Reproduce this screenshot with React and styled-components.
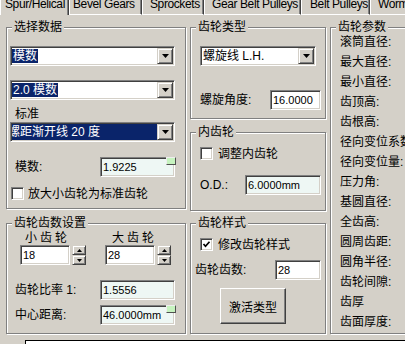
import React from 'react';
import styled, { createGlobalStyle } from 'styled-components';

const GlobalStyle = createGlobalStyle`
  * { box-sizing: border-box; }
  html, body { margin: 0; padding: 0; }
  body {
    width: 405px;
    height: 344px;
    overflow: hidden;
    background: #d4d0c8;
    color: #000;
    font-family: "Liberation Sans", "Noto Sans CJK SC", sans-serif;
    font-size: 12px;
  }
`;

const Window = styled.div`
  width: 405px;
  height: 344px;
  overflow: hidden;
  background: #d4d0c8;
`;

const TabBar = styled.div`
  display: flex;
  height: 15px;
`;

const Tab = styled.div`
  flex: 0 0 ${(p) => p.$w}px;
  height: 15px;
  padding-left: ${(p) => p.$pl}px;
  border-left: 1px solid #fff;
  border-right: 1px solid #404040;
  border-bottom: ${(p) => (p.$active ? '0' : '1px solid #fff')};
  box-shadow: inset -1px 0 0 #808080;
  font-size: 12px;
  letter-spacing: -0.4px;
  line-height: 8px;
  white-space: nowrap;
  overflow: hidden;
`;

const Panel = styled.div`
  display: flex;
  align-items: flex-start;
  gap: 4px;
  padding: 12px 0 0 6px;
`;

const Column = styled.div`
  flex: 0 0 ${(p) => p.$w}px;
  display: flex;
  flex-direction: column;
`;

const Group = styled.div`
  position: relative;
  height: ${(p) => p.$h}px;
  margin-top: ${(p) => p.$mt || 0}px;
  border: 1px solid #808080;
  box-shadow: inset 1px 1px 0 #fff, 1px 1px 0 #fff;
  display: flex;
  flex-direction: column;
  align-items: flex-start;
`;

const Legend = styled.span`
  position: absolute;
  top: -8px;
  left: 5px;
  padding: 0 2px;
  background: #d4d0c8;
  line-height: 14px;
  white-space: nowrap;
`;

const Combo = styled.div`
  display: flex;
  width: ${(p) => p.$w}px;
  height: 20px;
  margin: ${(p) => p.$mt}px 0 0 ${(p) => p.$ml}px;
  border: 1px solid;
  border-color: #808080 #fff #fff #808080;
  box-shadow: inset 1px 1px 0 #404040, inset -1px -1px 0 #d4d0c8;
  padding: 1px;
  background: #fff;
`;

const ComboValue = styled.div`
  flex: 1;
  min-width: 0;
  height: 16px;
  overflow: hidden;
  white-space: nowrap;
  line-height: 16px;
  padding-left: ${(p) => (p.$plain ? 1 : 0)}px;
  text-indent: ${(p) => p.$indent || 0}px;
  background: ${(p) => (p.$full ? '#0a246a' : 'transparent')};
  color: ${(p) => (p.$full ? '#fff' : '#000')};
`;

const Selected = styled.span`
  display: inline-block;
  vertical-align: top;
  margin-top: 1px;
  padding: 0 1px;
  line-height: 14px;
  background: #0a246a;
  color: #fff;
`;

const DropButton = styled.div`
  flex: 0 0 16px;
  height: 16px;
  display: flex;
  align-items: center;
  justify-content: center;
  background: #d4d0c8;
  border: 1px solid;
  border-color: #d4d0c8 #404040 #404040 #d4d0c8;
  box-shadow: inset 1px 1px 0 #fff, inset -1px -1px 0 #808080;
`;

const Caption = styled.div`
  margin: ${(p) => p.$mt}px 0 0 ${(p) => p.$ml}px;
  line-height: 16px;
  white-space: nowrap;
`;

const Row = styled.div`
  align-self: stretch;
  display: flex;
  align-items: center;
  height: 20px;
  margin-top: ${(p) => p.$mt}px;
  padding: 0 ${(p) => p.$pr}px 0 ${(p) => p.$pl}px;
`;

const Label = styled.span`
  flex: 1;
  white-space: nowrap;
  line-height: 14px;
`;

const Field = styled.div`
  position: relative;
  flex: 0 0 ${(p) => p.$w}px;
  width: ${(p) => p.$w}px;
  height: 20px;
  border: 1px solid;
  border-color: #808080 #fff #fff #808080;
  box-shadow: inset 1px 1px 0 #404040, inset -1px -1px 0 #d4d0c8;
  background: ${(p) => (p.$pale ? '#eef7f4' : '#fff')};
  padding: 1px 0 0 2px;
  font-size: 11px;
  line-height: 16px;
  white-space: nowrap;
`;

const Corner = styled.span`
  position: absolute;
  top: -1px;
  right: -2px;
  width: 10px;
  height: 8px;
  background: #c6f3bf;
  border: 1px solid;
  border-color: #eeeeee #505050 #505050 #eeeeee;
`;

const CheckRow = styled.div`
  display: flex;
  align-items: center;
  gap: ${(p) => p.$gap}px;
  height: 13px;
  margin-top: ${(p) => p.$mt}px;
  padding-left: ${(p) => p.$pl}px;
  white-space: nowrap;
  line-height: 14px;
`;

const CheckBox = styled.span`
  flex: 0 0 13px;
  height: 13px;
  display: flex;
  align-items: center;
  justify-content: center;
  background: #fff;
  border: 1px solid;
  border-color: #808080 #fff #fff #808080;
  box-shadow: inset 1px 1px 0 #404040, inset -1px -1px 0 #d4d0c8;
`;

const SpinSection = styled.div`
  display: flex;
  gap: 19px;
  margin-top: 7px;
  padding-left: 13px;
`;

const Spinner = styled.div`
  display: flex;
  flex-direction: column;
`;

const SpinCaption = styled.div`
  margin-left: ${(p) => p.$ml}px;
  font-size: 12px;
  letter-spacing: 3px;
  line-height: 14px;
  white-space: nowrap;
`;

const SpinBody = styled.div`
  display: flex;
  gap: 2px;
`;

const SpinButtons = styled.div`
  display: flex;
  flex-direction: column;
  width: 14px;
  height: 20px;
`;

const SpinButton = styled.div`
  flex: 1;
  display: flex;
  align-items: center;
  justify-content: center;
  background: #d4d0c8;
  border: 1px solid;
  border-color: #d4d0c8 #404040 #404040 #d4d0c8;
  box-shadow: inset 1px 1px 0 #fff, inset -1px -1px 0 #808080;
`;

const PushButton = styled.button`
  width: 66px;
  height: 36px;
  margin: 8px 0 0 29px;
  padding: 0;
  background: #d4d0c8;
  border: 1px solid;
  border-color: #fff #404040 #404040 #fff;
  box-shadow: inset -1px -1px 0 #808080;
  font-family: "Liberation Sans", "Noto Sans CJK SC", sans-serif;
  font-size: 12px;
  color: #000;
`;

const ParamList = styled.div`
  display: flex;
  flex-direction: column;
  padding: 4px 0 0 9px;
`;

const Param = styled.div`
  height: 20px;
  line-height: 20px;
  white-space: nowrap;
`;

const BottomBox = styled.div`
  width: 400px;
  height: 20px;
  margin: 6px 0 0 25px;
  border: 1px solid #000;
  background: #fff;
`;

const Arrow = ({ up, w = 7, h = 4 }) => (
  <svg width={w} height={h} viewBox={`0 0 ${w} ${h}`}>
    <polygon
      points={up ? `0,${h} ${w},${h} ${w / 2},0` : `0,0 ${w},0 ${w / 2},${h}`}
      fill="#000"
    />
  </svg>
);

const Check = () => (
  <svg width="9" height="9" viewBox="0 0 9 9">
    <polyline points="1.5,4 3.5,6.3 7.5,1.8" fill="none" stroke="#000" strokeWidth="1.7" />
  </svg>
);

const tabs = [
  { label: 'Spur/Helical', w: 69, pl: 4, active: true },
  { label: 'Bevel Gears', w: 73, pl: 3 },
  { label: 'Sprockets', w: 62, pl: 7 },
  { label: 'Gear Belt Pulleys', w: 97, pl: 7 },
  { label: 'Belt Pulleys', w: 69, pl: 8 },
  { label: 'Worm Gears', w: 80, pl: 7 },
];

const params = [
  '滚筒直径:', '最大直径:', '最小直径:', '齿顶高:', '齿根高:', '径向变位系数',
  '径向变位量:', '压力角:', '基圆直径:', '全齿高:', '圆周齿距:', '圆角半径:',
  '齿轮间隙:', '齿厚', '齿面厚度:',
];

function Spin({ caption, captionOffset, value }) {
  return (
    <Spinner>
      <SpinCaption $ml={captionOffset}>{caption}</SpinCaption>
      <SpinBody>
        <Field $w={50}>{value}</Field>
        <SpinButtons>
          <SpinButton><Arrow up w={5} h={3} /></SpinButton>
          <SpinButton><Arrow w={5} h={3} /></SpinButton>
        </SpinButtons>
      </SpinBody>
    </Spinner>
  );
}

export default function App() {
  return (
    <Window>
      <GlobalStyle />
      <TabBar>
        {tabs.map((t) => (
          <Tab key={t.label} $w={t.w} $pl={t.pl} $active={t.active}>{t.label}</Tab>
        ))}
      </TabBar>
      <Panel>
        <Column $w={180}>
          <Group $h={182}>
            <Legend>选择数据</Legend>
            <Combo $w={165} $mt={18} $ml={3}>
              <ComboValue><Selected>模数</Selected></ComboValue>
              <DropButton><Arrow /></DropButton>
            </Combo>
            <Combo $w={165} $mt={14} $ml={3}>
              <ComboValue><Selected>2.0 模数</Selected></ComboValue>
              <DropButton><Arrow /></DropButton>
            </Combo>
            <Caption $mt={6} $ml={8}>标准</Caption>
            <Combo $w={165} $mt={0} $ml={3}>
              <ComboValue $full $indent={-4}>螺距渐开线 20 度</ComboValue>
              <DropButton><Arrow /></DropButton>
            </Combo>
            <Row $mt={15} $pl={8} $pr={10}>
              <Label>模数:</Label>
              <Field $w={75} $pale>1.9225<Corner /></Field>
            </Row>
            <CheckRow $mt={10} $pl={4} $gap={4}>
              <CheckBox />
              <span>放大小齿轮为标准齿轮</span>
            </CheckRow>
          </Group>
          <Group $h={111} $mt={14}>
            <Legend>齿轮齿数设置</Legend>
            <SpinSection>
              <Spin caption="小齿轮" captionOffset={5} value="18" />
              <Spin caption="大齿轮" captionOffset={7} value="28" />
            </SpinSection>
            <Row $mt={15} $pl={8} $pr={10}>
              <Label>齿轮比率 1:</Label>
              <Field $w={75} $pale>1.5556</Field>
            </Row>
            <Row $mt={5} $pl={8} $pr={10}>
              <Label>中心距离:</Label>
              <Field $w={75} $pale>46.0000mm<Corner /></Field>
            </Row>
          </Group>
        </Column>

        <Column $w={136}>
          <Group $h={92}>
            <Legend>齿轮类型</Legend>
            <Combo $w={116} $mt={18} $ml={9}>
              <ComboValue $plain>螺旋线 L.H.</ComboValue>
              <DropButton><Arrow /></DropButton>
            </Combo>
            <Row $mt={24} $pl={9} $pr={4}>
              <Label>螺旋角度:</Label>
              <Field $w={51}>16.0000</Field>
            </Row>
          </Group>
          <Group $h={79} $mt={13}>
            <Legend>内齿轮</Legend>
            <CheckRow $mt={14} $pl={9} $gap={5}>
              <CheckBox />
              <span>调整内齿轮</span>
            </CheckRow>
            <Row $mt={15} $pl={9} $pr={4}>
              <Label>O.D.:</Label>
              <Field $w={76} $pale>6.0000mm</Field>
            </Row>
          </Group>
          <Group $h={111} $mt={12}>
            <Legend>齿轮样式</Legend>
            <CheckRow $mt={14} $pl={9} $gap={5}>
              <CheckBox><Check /></CheckBox>
              <span>修改齿轮样式</span>
            </CheckRow>
            <Row $mt={9} $pl={4} $pr={4}>
              <Label>齿轮齿数:</Label>
              <Field $w={46}>28</Field>
            </Row>
            <PushButton type="button">激活类型</PushButton>
          </Group>
        </Column>

        <Column $w={120}>
          <Group $h={307}>
            <Legend>齿轮参数</Legend>
            <ParamList>
              {params.map((p) => (
                <Param key={p}>{p}</Param>
              ))}
            </ParamList>
          </Group>
        </Column>
      </Panel>
      <BottomBox />
    </Window>
  );
}
